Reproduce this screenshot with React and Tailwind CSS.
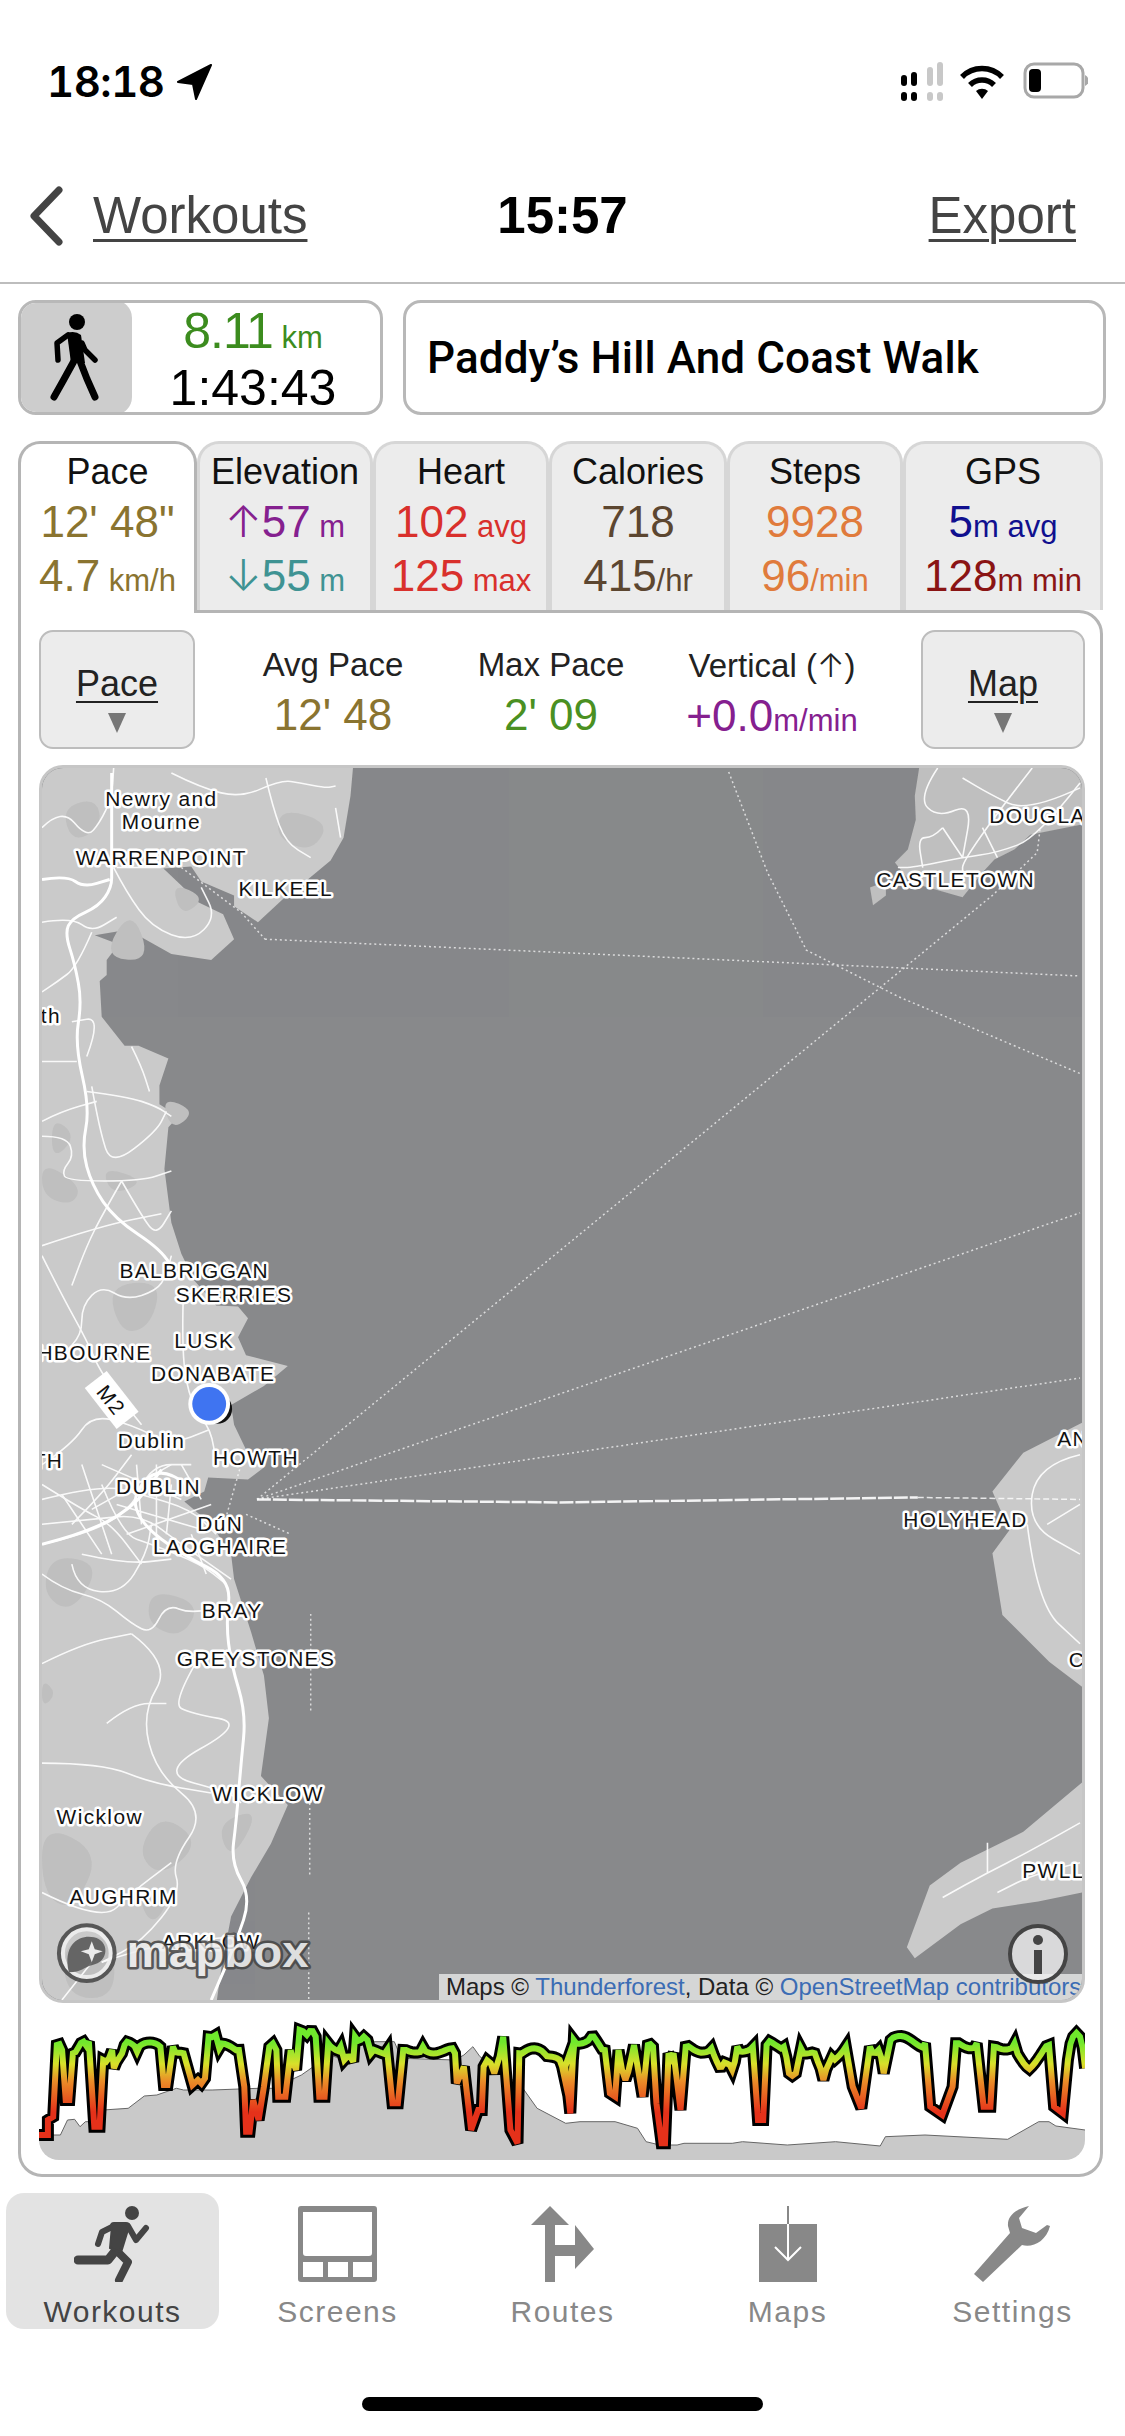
import React from "react";

const labels = [
  ["Newry and", 120, 30], ["Mourne", 120, 53], ["WARRENPOINT", 120, 89], ["KILKEEL", 245, 121], ["th", 9, 248],
  ["BALBRIGGAN", 153, 504], ["SKERRIES", 193, 529], ["LUSK", 163, 575], ["SHBOURNE", 45, 587], ["DONABATE", 172, 608],
  ["Dublin", 110, 675], ["HOWTH", 215, 692], ["TH", 6, 695], ["DUBLIN", 117, 722], ["DúN", 179, 759], ["LAOGHAIRE", 179, 782],
  ["BRAY", 191, 846], ["GREYSTONES", 215, 894], ["WICKLOW", 227, 1030], ["Wicklow", 58, 1053], ["AUGHRIM", 82, 1134],
  ["ARKLOW", 170, 1179], ["CASTLETOWN", 918, 112], ["DOUGLAS", 1008, 47], ["HOLYHEAD", 928, 755], ["AN", 1036, 673],
  ["C", 1040, 895], ["PWLLI", 1020, 1107],
];

const roads = [
  "M0 60 L20 40 L45 70 L58 55 L70 30 L72 0",
  "M130 5 L160 20 L200 30 L240 12 L260 15 L285 20 L295 18",
  "M72 100 L85 125 L110 160 L150 175 L175 150 L160 120 M75 100 L120 100",
  "M225 10 L232 40 L245 75 L270 90 M300 70 L295 40",
  "M0 155 L30 150 L50 165 L75 150 M50 165 L35 200 L15 215 L0 225",
  "M0 295 L35 295 M0 355 L20 345 L55 335 M45 325 L85 330 L115 340 L130 350",
  "M0 370 L25 370 L32 390 L20 405 L25 415 L100 415 L130 405",
  "M90 280 L100 300 L108 325 M45 290 L60 250 L30 255 M50 320 L58 365 L70 400 L115 365 L125 345",
  "M80 415 L60 450 L45 480 L30 520 M80 415 L100 450 L115 470 L130 445",
  "M0 480 L60 460 L120 448",
  "M130 490 L125 510 L115 525 L85 535 L60 520 L40 540 L40 570 L20 590",
  "M0 490 L20 530 L45 575 L60 610 L100 660",
  "M142 530 L140 590 L150 640 L170 665 L175 700",
  "M0 700 L30 680 L50 650 L90 660 L130 680 L168 665",
  "M0 735 L60 720 L100 730 L150 745 L175 770",
  "M0 760 L50 755 L100 750 L140 780 L190 815",
  "M0 780 L45 770 L90 745 L110 700 L150 700",
  "M60 720 L80 770 L110 780 L160 800 L185 820",
  "M30 800 L35 825 L80 830 L105 790 L110 760",
  "M0 810 L20 825 L60 835 L90 860 L110 870 L125 840 L150 850 L190 840",
  "M40 700 L70 790 M95 700 L100 760 M130 720 L125 770 M75 740 L160 765 M50 745 L130 700 M85 770 L170 740 M115 700 L115 780 M60 700 L140 735 M20 730 L60 790",
  "M0 720 L40 745 L70 760 L100 800 M30 760 L60 730 L90 690 M140 700 L160 735 M150 770 L165 810 M40 790 L85 800 L130 795",
  "M90 870 L130 900 L100 950 L115 1010 L165 1050 L130 1100 L140 1130 L100 1180 L60 1200",
  "M160 890 L130 940 L150 950 L205 960 L115 1010 L190 1030 L200 1040",
  "M65 960 L90 940 L125 940 M0 1000 L60 1000 L110 1020 L170 1030 M0 900 L40 880 L90 870",
  "M0 1130 L60 1160 L90 1130 L130 1100 M60 1200 L120 1180 L190 1175 M20 1238 L50 1200",
  "M900 0 L880 30 L900 50 L935 35 L925 90 M995 0 L925 90 L925 110 M1043 20 L990 45 L950 25 L925 10",
  "M1043 15 L1000 70 L960 85 L925 90 L875 100 L860 100 M905 60 L895 70 L880 70 L885 100 M945 60 L960 90 M905 60 L925 90",
  "M1043 690 L1000 700 L990 760 L1043 790 M990 760 L1000 840 L1043 880 M1043 740 L1010 760",
  "M1043 1060 L990 1090 L950 1110 L905 1135 M1043 1100 L1000 1110 L960 1130 M950 1110 L950 1080",
];

const mainRoads = [
  "M70 5 L70 101 L70 120 L57 139 L30 151 L23 166 L33 197 L40 235 L33 277 L48 342 L40 382 L50 419 L73 453 L120 484 L135 510",
  "M0 112 L25 108 L42 120 L68 112",
  "M145 720 L120 700 L90 730 L100 760 L140 790 L190 815 L185 860 L190 900 L205 950 L200 1000 L195 1060 L190 1100 L210 1135 L195 1180 L170 1238",
  "M0 780 L40 770 L90 745 L120 705",
];

const ferries = [
  "M216 735 L1043 613", "M216 735 L1043 447", "M216 735 L955 128 L1000 85 L1003 60",
  "M224 172 L1043 209", "M690 4 L729 105 L768 183 L861 230 L1043 307", "M205 750 L250 770 M200 700 L180 770",
  "M270 850 L270 950 M269 1030 L269 1115 M268 1150 L268 1238", "M140 100 L200 145 L224 172",
];

const patches = [
  "M20 40 L55 30 L60 60 L30 75Z", "M240 40 L290 55 L270 85 L235 70Z", "M130 115 L165 130 L140 150Z", "M60 400 L105 415 L70 430Z",
  "M65 520 L120 515 L110 560 L80 570Z", "M0 395 L40 420 L30 440 L0 430Z", "M10 790 L60 800 L30 850 L0 830Z", "M120 1050 L160 1080 L120 1115 L95 1090Z",
  "M0 1060 L60 1090 L30 1150 L0 1130Z", "M0 915 L15 930 L0 945Z", "M110 825 L160 840 L140 875 L105 860Z", "M20 1180 L70 1170 L75 1236 L25 1236Z",
  "M95 1130 L130 1135 L110 1165Z", "M175 1060 L220 1045 L190 1100Z", "M90 140 L110 195 L60 190Z", "M120 330 L155 345 L130 365Z", "M10 350 L35 370 L10 395Z",
];

// round off straight runs, the map tiles have no hard corners
const smooth = (d) =>
  d.split(/(?=M)/).map((sub) => {
    const closed = sub.includes("Z");
    const nums = sub.match(/-?[\d.]+/g).map(Number);
    const pts = [];
    for (let i = 0; i < nums.length; i += 2) pts.push([nums[i], nums[i + 1]]);
    const mid = (a, b) => `${(a[0] + b[0]) / 2} ${(a[1] + b[1]) / 2}`;
    if (closed) {
      let out = `M${mid(pts[pts.length - 1], pts[0])}`;
      pts.forEach((p, i) => { out += ` Q${p[0]} ${p[1]} ${mid(p, pts[(i + 1) % pts.length])}`; });
      return out + "Z";
    }
    let out = `M${pts[0][0]} ${pts[0][1]}`;
    for (let i = 1; i < pts.length - 1; i++) out += ` Q${pts[i][0]} ${pts[i][1]} ${mid(pts[i], pts[i + 1])}`;
    return out + ` L${pts[pts.length - 1][0]} ${pts[pts.length - 1][1]}`;
  }).join(" ");

const toPts = (list, sx, ox) => list.map(([x, y]) => [x / sx + ox, y / 3]);

const paceA = toPts([[25,345],[50,345],[50,300],[65,290],[75,75],[90,90],[100,240],[110,240],[120,100],[150,65],[165,65],[180,320],[195,320],[205,120],[230,90],[235,145],[265,75],[300,95],[350,70],[365,80],[375,195],[385,195],[400,80],[430,100],[455,195],[470,180],[490,175],[500,50],[520,45],[530,85],[585,90],[600,200],[605,335],[615,335],[625,240],[640,300],[655,200],[670,80],[690,90],[695,230],[715,230],[730,90],[745,150],[755,30],[775,45],[800,50],[810,230],[825,230],[835,70],[870,80],[880,120],[905,125],[910,50],[935,50],[955,100],[1000,90],[1015,250],[1030,250],[1045,90],[1100,80],[1190,100],[1195,190],[1215,140],[1235,330],[1255,270],[1265,270],[1270,140],[1290,130],[1300,160],[1315,110],[1325,50],[1345,330],[1365,370],[1370,100],[1440,100],[1490,140],[1510,240],[1525,60]], 2.8, -9);
const paceB = toPts([[15,140],[30,280],[40,60],[90,50],[130,90],[145,220],[160,230],[170,90],[190,180],[215,75],[240,230],[255,75],[270,80],[280,250],[295,370],[305,370],[315,100],[330,100],[350,270],[365,80],[440,85],[470,140],[500,150],[515,80],[560,80],[575,300],[590,300],[600,75],[650,80],[665,160],[685,160],[700,85],[740,100],[765,180],[790,110],[830,80],[850,200],[875,265],[900,80],[925,90],[940,160],[960,60],[1060,70],[1075,260],[1110,285],[1140,200],[1150,70],[1210,70],[1230,260],[1250,260],[1260,80],[1320,70],[1355,140],[1420,75],[1435,260],[1460,280],[1475,120],[1490,50],[1510,50],[1525,145]], 2.904, 521);

// break up the flat top sections so the line looks like noisy sample data
const roughen = (pts) => {
  const out = [];
  pts.forEach((p, i) => {
    out.push(p);
    const n = pts[i + 1];
    if (n && p[1] < 62 && n[1] < 62 && n[0] - p[0] > 4) {
      const steps = Math.floor((n[0] - p[0]) / 2.5);
      for (let k = 1; k < steps; k++) {
        const t = k / steps;
        out.push([p[0] + (n[0] - p[0]) * t, p[1] + (n[1] - p[1]) * t + Math.sin(k * 12.9 + p[0]) * 5]);
      }
    }
  });
  return out;
};
const pacePts = roughen([...paceA, ...paceB]).map(([x, y]) => `${x.toFixed(1)},${y.toFixed(1)}`).join(" ");

const elevA = toPts([[25,360],[60,345],[85,345],[105,300],[125,298],[140,320],[155,305],[200,305],[205,270],[275,265],[320,228],[355,225],[410,205],[430,210],[510,210],[640,205],[680,205],[760,165],[840,105],[880,120],[945,45],[965,65],[1020,65],[1040,115],[1190,120],[1215,105],[1240,80],[1260,110],[1340,170],[1380,205],[1420,265],[1500,310],[1540,305]], 2.8, -9);
const elevB = toPts([[160,305],[225,325],[250,365],[290,375],[340,375],[360,370],[500,370],[530,365],[660,375],[800,365],[930,378],[945,350],[1060,345],[1300,358],[1390,305],[1420,305],[1440,318],[1525,330]], 2.904, 521);
const elevLine = [...elevA, ...elevB].map(([x, y]) => `${x.toFixed(1)},${y.toFixed(1)}`).join(" ");

const tabs = [
  { title: "Pace", w: "w-[179px]", active: true, a: ["", "12' 48\"", "", "text-[#8a7430]"], b: ["", "4.7", " km/h", "text-[#8a7430]"] },
  { title: "Elevation", w: "w-[176px]", a: ["↑", "57", " m", "text-[#85208f]"], b: ["↓", "55", " m", "text-[#3f9393]"] },
  { title: "Heart", w: "w-[176px]", a: ["", "102", " avg", "text-[#d9302c]"], b: ["", "125", " max", "text-[#d9302c]"] },
  { title: "Calories", w: "w-[178px]", a: ["", "718", "", "text-[#5c4630]"], b: ["", "415", "/hr", "text-[#5c4630]"] },
  { title: "Steps", w: "w-[176px]", a: ["", "9928", "", "text-[#e07b3c]"], b: ["", "96", "/min", "text-[#e07b3c]"] },
  { title: "GPS", w: "w-[200px]", a: ["", "5", "m avg", "text-[#10108f]"], b: ["", "128", "m min", "text-[#8a1414]"] },
];

const StatusBar = () => (
  <div className="h-[150px] pt-[57px] pl-[47px] pr-[37px] flex justify-between items-start">
    <div className="flex items-center gap-[12px]">
      <span className="text-[42px] leading-[50px] font-semibold text-black font-['Inter',sans-serif] tabular-nums tracking-[-0.5px]">18:18</span>
      <svg width="36" height="36" viewBox="0 0 36 36">
        <path d="M35 1 L2 18 L17 20 L20 35Z" fill="#000" stroke="#000" strokeWidth="2" strokeLinejoin="round" />
      </svg>
    </div>
    <svg width="190" height="40" viewBox="0 0 190 40" className="mt-[5px]">
      <g fill="#000">
        <rect x="3" y="13" width="6" height="11" rx="3" /><rect x="3" y="30" width="6" height="9" rx="3" />
        <rect x="13" y="10" width="6" height="14" rx="3" /><rect x="13" y="30" width="6" height="9" rx="3" />
      </g>
      <g fill="#c8c8c8">
        <rect x="29" y="5" width="6" height="19" rx="3" /><rect x="29" y="30" width="6" height="9" rx="3" />
        <rect x="39" y="0" width="6" height="24" rx="3" /><rect x="39" y="30" width="6" height="9" rx="3" />
      </g>
      <g fill="none" stroke="#000" strokeWidth="5.5">
        <path d="M64 15 A28 28 0 0 1 104 15" />
        <path d="M72 23 A17 17 0 0 1 96 23" />
      </g>
      <path d="M78 29 A9 9 0 0 1 90 29 L84 37Z" fill="#000" />
      <rect x="127" y="2" width="58" height="33" rx="9" fill="none" stroke="#a8a8a8" strokeWidth="3" />
      <rect x="131" y="7" width="12" height="23" rx="4" fill="#000" />
      <path d="M187 13 A6 6 0 0 1 187 24Z" fill="#a8a8a8" />
    </svg>
  </div>
);

const NavBar = () => (
  <div className="h-[134px] border-b-2 border-[#bdbdbd] grid grid-cols-3 items-center text-[51px] leading-[60px]">
    <div className="flex items-center pl-[28px] gap-[29px]">
      <svg width="36" height="60" viewBox="0 0 36 60" className="shrink-0">
        <path d="M31 4 L6 30 L31 56" fill="none" stroke="#444" strokeWidth="7" strokeLinecap="round" strokeLinejoin="round" />
      </svg>
      <span className="text-[#444] underline decoration-[3px] underline-offset-[6px]">Workouts</span>
    </div>
    <div className="text-center font-bold text-black">15:57</div>
    <div className="text-right pr-[49px] text-[#444] underline decoration-[3px] underline-offset-[6px]">Export</div>
  </div>
);

const Summary = () => (
  <div className="mt-[16px] ml-[18px] mr-[19px] h-[115px] flex gap-[20px]">
    <div className="w-[365px] flex border-[3px] border-[#b8b8b8] rounded-[18px] overflow-hidden">
      <div className="w-[114px] bg-[#cdcdcd] flex items-center justify-center -ml-[3px] -my-[3px] rounded-r-[18px]">
        <svg width="60" height="90" viewBox="0 0 60 90">
          <circle cx="32" cy="9" r="8" fill="#000" />
          <path d="M22 20 Q30 17 36 22 L40 50 L26 50Z" fill="#000" />
          <path d="M23 22 L12 30 L13 47" fill="none" stroke="#000" strokeWidth="5.5" strokeLinecap="round" strokeLinejoin="round" />
          <path d="M37 30 L40 37 L50 47" fill="none" stroke="#000" strokeWidth="5.5" strokeLinecap="round" strokeLinejoin="round" />
          <path d="M29 48 L18 68 L9 84" fill="none" stroke="#000" strokeWidth="7" strokeLinecap="round" />
          <path d="M35 48 L42 66 L50 84" fill="none" stroke="#000" strokeWidth="7" strokeLinecap="round" />
        </svg>
      </div>
      <div className="flex-1 text-center pt-[2px] pr-[6px]">
        <div className="text-[50px] leading-[52px] text-[#3c8c1e] tracking-[-1px]">8.11<span className="text-[31px] tracking-normal"> km</span></div>
        <div className="text-[50px] leading-[48px] text-black">1:43:43</div>
      </div>
    </div>
    <div className="flex-1 border-[3px] border-[#b8b8b8] rounded-[18px] flex items-center pl-[21px] text-[44px] font-medium text-black font-['Roboto',sans-serif] tracking-[0.1px]">
      Paddy’s Hill And Coast Walk
    </div>
  </div>
);

const TabValue = ({ parts }) => {
  const [arrow, big, small, color] = parts;
  return (
    <div className={`${color} text-[44px] leading-[49px] whitespace-nowrap`}>
      {arrow && <span className="font-['Inter',sans-serif] font-light">{arrow}</span>}
      {big}<span className="text-[31px]">{small}</span>
    </div>
  );
};

const Tabs = () => (
  <div className="mt-[26px] ml-[18px] flex h-[172px] relative z-10">
    {tabs.map((t) => (
      <div
        key={t.title}
        className={`${t.w} text-center pt-[7px] rounded-t-[22px] border-[3px] border-b-0 ${t.active ? "h-[172px] bg-white border-[#b5b5b5]" : "h-[169px] bg-[#ececec] border-[#d6d6d6]"}`}
      >
        <div className="text-[36px] leading-[42px] text-[#111] mb-[4px]">{t.title}</div>
        <TabValue parts={t.a} />
        <TabValue parts={t.b} />
      </div>
    ))}
  </div>
);

const DropButton = ({ label, w }) => (
  <div className={`${w} h-[119px] shrink-0 bg-[#ececec] border-2 border-[#bdbdbd] rounded-[14px] flex flex-col items-center pt-[30px]`}>
    <span className="text-[36px] leading-[44px] text-[#222] underline decoration-[2px] underline-offset-[5px]">{label}</span>
    <svg width="18" height="20" viewBox="0 0 18 20" className="mt-[7px]"><path d="M0 0 H18 L9 20Z" fill="#777" /></svg>
  </div>
);

const Stat = ({ w, label, arrow, value, unit, color }) => (
  <div className={`${w} text-center`}>
    <div className="text-[33px] leading-[40px] text-[#222] mb-[6px] whitespace-nowrap">
      {label}
      {arrow && <><span className="font-['Inter',sans-serif] font-light">{arrow}</span>)</>}
    </div>
    <div className={`${color} text-[44px] leading-[48px]`}>{value}<span className="text-[31px]">{unit}</span></div>
  </div>
);

const MapView = () => (
  <div className="mt-[16px] h-[1238px] relative rounded-[24px] overflow-hidden border-[3px] border-[#c6c6c6] bg-[#88898b]">
    <svg viewBox="0 0 1045 1238" className="block w-full h-full" preserveAspectRatio="none">
      <rect width="1045" height="1238" fill="#88898b" />
      <path
        d="M-40 -40 L316 -40 L310 28 L303 70 L290 93 L267 112 L243 131 L217 155 L193 139 L193 128 L160 114 L150 99 L122 101 L140 118 L157 135 L182 147 L193 172 L170 193 L130 187 L100 170 L77 164 L53 168 L77 177 L65 193 L65 208 L58 214 L60 250 L83 279 L97 279 L127 292 L118 319 L118 338 L137 350 L127 361 L123 403 L130 457 L140 488 L153 515 L175 540 L197 541 L207 553 L197 572 L205 590 L247 601 L223 621 L190 640 L193 660 L207 689 L223 703 L207 715 L167 713 L163 727 L143 737 L170 760 L190 790 L193 815 L210 868 L223 912 L228 955 L220 1013 L247 1042 L230 1081 L210 1115 L190 1154 L180 1207 L170 1280 L-40 1280Z"
        fill="#cacaca"
      />
      <path d="M886 -30 L877 28 L878 52 L870 82 L857 95 L873 115 L925 130 L945 105 L957 92 L977 82 L993 67 L1080 50 L1080 -30Z" fill="#bfbfbf" />
      <path d="M832 120 L848 114 L848 128 L835 138Z" fill="#bfbfbf" />
      <path d="M1080 640 L986 688 L955 727 L972 766 L955 789 L965 851 L1012 898 L1080 950Z" fill="#cacaca" />
      <path d="M1080 990 L986 1069 L923 1100 L892 1123 L869 1185 L877 1196 L923 1162 L955 1146 L1001 1139 L1080 1123Z" fill="#cacaca" />
      {patches.map((d) => <path key={d} d={smooth(d)} fill="#bfbfbf" />)}
      <g fill="none" stroke="#fff" strokeWidth="1.6" strokeLinejoin="round" opacity="0.9">
        {roads.map((d) => <path key={d} d={smooth(d)} />)}
      </g>
      <g fill="none" stroke="#fff" strokeWidth="3" strokeLinejoin="round">
        {mainRoads.map((d) => <path key={d} d={smooth(d)} />)}
      </g>
      <g fill="none" stroke="#fff" strokeWidth="1.5" strokeDasharray="2 3" opacity="0.7">
        {ferries.map((d) => <path key={d} d={d} />)}
      </g>
      <path d="M216 735 L520 738 L880 733" fill="none" stroke="#fff" strokeWidth="2.5" strokeDasharray="14 2" opacity="0.9" />
      <path d="M880 733 L1043 735" fill="none" stroke="#fff" strokeWidth="1.5" strokeDasharray="6 3" opacity="0.8" />
      <g
        fontFamily="'Liberation Sans', sans-serif"
        fontSize="21"
        letterSpacing="1.4"
        textAnchor="middle"
        fill="#111"
        stroke="#fff"
        strokeWidth="5"
        paintOrder="stroke"
        strokeLinejoin="round"
      >
        {labels.map(([text, x, y]) => <text key={text + x} x={x} y={y + 8}>{text}</text>)}
        <g transform="translate(70 635) rotate(52)">
          <rect x="-26" y="-14" width="52" height="28" fill="#fff" stroke="none" />
          <text x="0" y="8" stroke="none">M2</text>
        </g>
      </g>
      <circle cx="176" cy="644" r="15" fill="#111" />
      <circle cx="168" cy="639" r="21" fill="#fff" />
      <circle cx="168" cy="639" r="17" fill="#3f74f1" />
      <g opacity="0.85">
        <circle cx="45" cy="1191" r="27" fill="none" stroke="#444" strokeWidth="6" />
        <circle cx="45" cy="1191" r="24" fill="none" stroke="#f2f2f2" strokeWidth="4" />
        <path d="M27 1210 C20 1180 40 1172 52 1175 C68 1178 68 1200 50 1203 C42 1205 40 1210 27 1210Z" fill="#555" />
        <path d="M50 1179 L53 1187 L61 1189 L53 1192 L50 1200 L47 1192 L39 1189 L47 1187Z" fill="#f2f2f2" />
        <text x="85" y="1205" fontFamily="'Liberation Sans', sans-serif" fontWeight="700" fontSize="44" textLength="183" lengthAdjust="spacingAndGlyphs" fill="#eeeeee" stroke="#444" strokeWidth="5" paintOrder="stroke" strokeLinejoin="round">mapbox</text>
      </g>
    </svg>
    <div className="absolute right-0 bottom-0 w-[643px] h-[26px] bg-white/65 text-[24px] leading-[26px] whitespace-nowrap pl-[7px] text-[#222] overflow-hidden">
      Maps © <span className="text-[#3b6cb4]">Thunderforest</span>, Data © <span className="text-[#3b6cb4]">OpenStreetMap contributors</span>
    </div>
    <svg width="62" height="62" viewBox="0 0 62 62" className="absolute right-[13px] bottom-[15px]">
      <circle cx="31" cy="31" r="28" fill="#ededed" fillOpacity="0.8" stroke="#444" strokeWidth="4" />
      <circle cx="31" cy="17" r="5" fill="#444" />
      <rect x="27" y="27" width="8" height="24" fill="#444" />
    </svg>
  </div>
);

const PaceChart = () => (
  <div className="mt-[17px] h-[140px] rounded-b-[20px] overflow-hidden">
    <svg width="1046" height="140" viewBox="0 0 1046 140" className="block">
      <defs>
        <linearGradient id="paceGrad" gradientUnits="userSpaceOnUse" x1="0" y1="22" x2="0" y2="100">
          <stop offset="0" stopColor="#6fe82c" />
          <stop offset="0.28" stopColor="#d8e02a" />
          <stop offset="0.5" stopColor="#ea8d28" />
          <stop offset="0.9" stopColor="#e5311a" />
        </linearGradient>
      </defs>
      <polygon points={`0,140 ${elevLine} 1046,140`} fill="#c9c9c9" />
      <polyline points={elevLine} fill="none" stroke="#666" strokeWidth="1" />
      <polyline points={pacePts} fill="none" stroke="#000" strokeWidth="12" strokeLinejoin="miter" strokeMiterlimit="3" />
      <polyline points={pacePts} fill="none" stroke="url(#paceGrad)" strokeWidth="6" strokeLinejoin="miter" strokeMiterlimit="3" />
    </svg>
  </div>
);

const Panel = () => (
  <div className="-mt-[3px] ml-[18px] w-[1085px] h-[1567px] border-[3px] border-[#b5b5b5] rounded-b-[24px] rounded-tr-[24px] pt-[17px] pl-[18px] pr-[15px]">
    <div className="flex">
      <DropButton label="Pace" w="w-[156px]" />
      <div className="flex-1 flex pl-[30px] pt-[15px]">
        <Stat w="w-[216px]" label="Avg Pace" value="12' 48" color="text-[#8a7430]" />
        <Stat w="w-[220px]" label="Max Pace" value="2' 09" color="text-[#4a9022]" />
        <Stat w="w-[222px]" label="Vertical (" arrow="↑" value="+0.0" unit="m/min" color="text-[#85208f]" />
      </div>
      <DropButton label="Map" w="w-[164px]" />
    </div>
    <MapView />
    <PaceChart />
  </div>
);

const RunnerIcon = () => (
  <svg width="78" height="76" viewBox="0 0 78 76" fill="none" stroke="#444" strokeLinecap="round" strokeLinejoin="round">
    <circle cx="58" cy="7" r="7" fill="#444" stroke="none" />
    <path d="M40 20 L52 20 L44 46 L54 56 L45 74" strokeWidth="8" />
    <path d="M40 20 L28 26 L24 38" strokeWidth="6" />
    <path d="M54 20 L62 34 L72 22" strokeWidth="6" />
    <path d="M42 44 L34 54 L4 54" strokeWidth="9" />
    <path d="M38 20 L54 20 L46 46 L36 42Z" fill="#444" strokeWidth="2" />
  </svg>
);

const ScreensIcon = () => (
  <svg width="79" height="76" viewBox="0 0 79 76" fill="#888">
    <path fillRule="evenodd" d="M3 0 H76 Q79 0 79 3 V73 Q79 76 76 76 H3 Q0 76 0 73 V3 Q0 0 3 0Z M5 6 V47 Q5 50 8 50 H71 Q74 50 74 47 V6Z M5 56 V71 H25 V56Z M30 56 V71 H50 V56Z M55 56 V71 H74 V56Z" />
  </svg>
);

const RoutesIcon = () => (
  <svg width="63" height="76" viewBox="0 0 63 76" fill="#888">
    <path d="M19 0 L38 19 H24 V39 H44 V19 L63 43 L44 63 V50 H24 V76 H14 V19 H0Z" />
  </svg>
);

const MapsIcon = () => (
  <svg width="58" height="76" viewBox="0 0 58 76">
    <rect x="0" y="18" width="58" height="58" fill="#888" />
    <path d="M29 0 V18" stroke="#888" strokeWidth="2" />
    <path d="M29 18 V54 M16 41 L29 54 L42 41" fill="none" stroke="#fff" strokeWidth="2" />
  </svg>
);

const WrenchIcon = () => (
  <svg width="77" height="76" viewBox="0 0 77 76" fill="#888">
    <path d="M55 0 C42 3 33 10 34 20 L36 27 L0 68 L9 76 L48 39 C58 42 72 36 76 20 L73 19 L62 27 L48 22 L45 12Z" />
  </svg>
);

const navItems = [
  { label: "Workouts", icon: <RunnerIcon />, active: true },
  { label: "Screens", icon: <ScreensIcon /> },
  { label: "Routes", icon: <RoutesIcon /> },
  { label: "Maps", icon: <MapsIcon /> },
  { label: "Settings", icon: <WrenchIcon /> },
];

const TabBar = () => (
  <div className="mt-[16px] grid grid-cols-5 h-[135px]">
    {navItems.map((item) => (
      <div
        key={item.label}
        className={`mx-[6px] rounded-[18px] flex flex-col items-center pt-[13px] ${item.active ? "bg-[#e3e3e3] text-[#444]" : "text-[#888]"}`}
      >
        <div className="h-[76px] flex items-center">{item.icon}</div>
        <div className="mt-[13px] text-[30px] leading-[34px] tracking-[1.5px]">{item.label}</div>
      </div>
    ))}
  </div>
);

export default function App() {
  return (
    <div className="w-[1125px] h-[2436px] bg-white overflow-hidden font-['Liberation_Sans',sans-serif]">
      <StatusBar />
      <NavBar />
      <Summary />
      <Tabs />
      <Panel />
      <TabBar />
      <div className="mt-[69px] mx-auto w-[401px] h-[14px] rounded-full bg-black" />
    </div>
  );
}
